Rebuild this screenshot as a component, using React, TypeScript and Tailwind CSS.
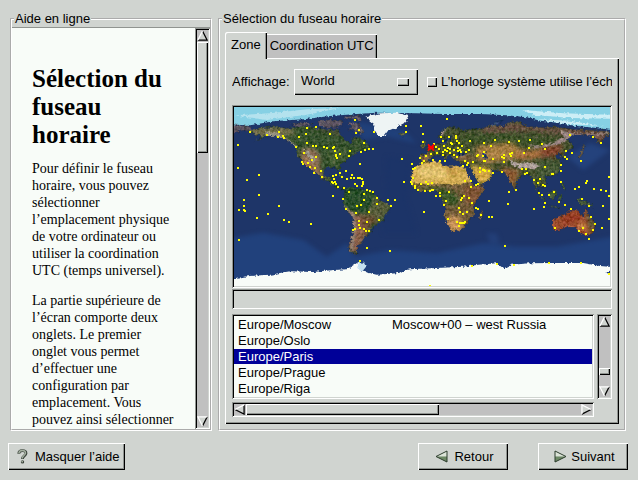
import { ReactNode } from 'react';

const raised = 'bg-[#d0d4d0] shadow-[inset_1px_1px_0_#fff,inset_-1px_-1px_0_#000,inset_-2px_-2px_0_#909490]';
const sunken = 'p-[2px] shadow-[inset_1px_1px_0_#909490,inset_-1px_-1px_0_#fff,inset_2px_2px_0_#000,inset_-2px_-2px_0_#d0d4d0]';

const zones = [
  { name: 'Europe/Moscow', note: 'Moscow+00 – west Russia' },
  { name: 'Europe/Oslo', note: '' },
  { name: 'Europe/Paris', note: '', selected: true },
  { name: 'Europe/Prague', note: '' },
  { name: 'Europe/Riga', note: '' },
];

// City markers, "x,y" in map units
const cities = `
60,96 111,105 147,96 144,111 159,108 162,114 24,135 231,84 258,81 228,102 207,111 300,102 375,60 378,99 387,91
198,141 231,129 222,159 249,138 258,138 282,141 291,144 309,144 312,141 315,153 318,165 318,168 321,174 330,162
360,153 357,168 258,171 246,180 216,186 219,192 234,189 240,201 255,204 273,213 252,219 276,231 24,204 87,225
51,240 87,285 42,300 42,318 27,330 42,330 45,333 147,318 114,342 81,354 162,360 177,366 243,372 27,420 309,288
339,297 348,327 348,213 330,219 318,225 309,228 312,237 336,231 351,237 363,234 372,234 366,225 384,234 306,246
309,249 315,246 318,252 324,261 342,264 357,276 375,252 381,258 381,318 378,339 375,387 369,390 387,363 387,375
390,483 390,192 528,78 573,78 528,96 579,102 651,57 432,96 402,129 393,156 405,150 417,147 429,147 579,126
516,177 546,192 555,204 549,207 549,234 522,246 543,246 546,252 555,258 555,264 564,270 585,273 600,272 606,270
609,270 573,252 588,246 594,252 606,249 570,174 576,189 582,183 588,168 603,162 609,180 621,159 627,147 612,132
618,141 633,111 657,111 639,123 642,138 639,156 639,165 645,150 654,144 651,153 660,147 663,129 666,132 678,108
678,114 681,123 687,129 696,138 684,144 672,150 660,159 672,165 681,171 684,153 690,150 693,156 708,156 720,123
717,150 741,168 744,165 759,168 762,183 705,183 714,189 699,198 711,195 729,186 750,216 762,210 630,183 645,183
705,243 723,243 723,261 738,255 744,252 657,276 630,279 618,288 630,288 648,303 642,315 693,300 696,294 702,288
717,294 726,309 738,324 744,327 753,345 687,324 690,336 699,342 711,336 654,357 681,366 690,369 696,369 702,369
705,366 687,378 582,336 474,300 495,300 483,318 441,294 441,312 402,282 402,300 411,270 420,273 429,276 393,315
417,336 447,360 411,366 390,384 402,387 408,393 417,393 411,444 480,453 726,498 599,558 390,234 396,237 399,246
399,252 396,258 381,258 762,129 783,138 795,120 837,126 867,123 900,120 897,144 936,132 945,147 882,159 840,162
846,159 843,168 822,165 816,171 822,174 822,186 816,216 762,156 765,183 789,177 750,204 759,210 765,213 777,213
789,219 876,207 888,207 891,219 885,222 945,201 912,240 924,249 930,237 939,255 945,258 858,270 837,276 834,312
777,303 777,351 786,351 927,279 936,285 957,285 972,276 945,309 942,321 912,327 987,306 1005,315 1023,327
1056,297 1077,318 1119,318 1083,351 1137,357 1095,372 1089,390 1116,384 1059,384 1047,393 1068,402 1077,417
975,384 993,195 993,213 993,246 966,222 969,222 1005,171 1011,177 1008,153 1026,159 1053,183 1020,105 1089,111
1113,129 1035,267 1047,261 1068,249 1071,243 1092,267 1113,270 1128,273 1138,231 1138,288 825,438 801,492
852,495 957,489 1053,489 1138,521`
  .trim()
  .split(/\s+/)
  .map((pair) => pair.split(',').map(Number));

const WorldMap = () => (
  <svg viewBox="12 21 1128 537" className="block w-full" role="img" aria-label="World">
    <defs>
      <filter id="terrain" filterUnits="userSpaceOnUse" x="0" y="10" width="1150" height="560" colorInterpolationFilters="sRGB">
        <feTurbulence type="fractalNoise" baseFrequency="0.12" numOctaves="3" seed="4" result="n" />
        <feDisplacementMap in="SourceGraphic" in2="n" scale="14" xChannelSelector="R" yChannelSelector="G" result="d" />
        <feColorMatrix in="n" type="matrix" values="1 0 0 0 0  .8 .2 0 0 0  .8 0 .2 0 0  0 0 0 0 1" result="g" />
        <feComposite in="d" in2="g" operator="arithmetic" k1="0" k2="0.94" k3="0.4" k4="-0.21" result="m" />
        <feComposite in="m" in2="d" operator="in" />
      </filter>
      <filter id="coast" filterUnits="userSpaceOnUse" x="0" y="10" width="1150" height="560" colorInterpolationFilters="sRGB">
        <feTurbulence type="fractalNoise" baseFrequency="0.1" numOctaves="2" seed="9" result="n" />
        <feDisplacementMap in="SourceGraphic" in2="n" scale="12" xChannelSelector="R" yChannelSelector="G" />
      </filter>
      <filter id="soft" filterUnits="userSpaceOnUse" x="0" y="0" width="1150" height="570" colorInterpolationFilters="sRGB">
        <feGaussianBlur stdDeviation="6" />
      </filter>
      <clipPath id="namerica">
        <path d="M55 90 90 83 130 80 175 84 215 78 260 82 300 90 325 88 333 105 350 122 362 130 370 112 388 112 410 125 420 140 412 150 388 155 372 163 358 172 345 184 331 194 330 214 322 212 316 203 300 202 284 207 280 224 290 233 304 224 308 233 302 242 316 250 328 262 345 263 340 269 320 264 296 246 274 236 258 218 238 205 222 194 208 176 199 156 196 141 176 125 160 116 132 108 108 110 70 126 98 108 66 102Z" />
      </clipPath>
      <clipPath id="samerica">
        <path d="M345 266 362 260 400 268 422 275 440 290 452 301 484 315 480 328 466 346 458 364 436 377 420 398 406 414 396 430 382 438 382 462 366 458 354 448 362 420 368 394 368 352 350 332 337 308 341 288Z" />
      </clipPath>
      <clipPath id="africa">
        <path d="M558 196 580 188 614 182 630 184 636 194 660 200 680 196 706 202 718 232 734 256 765 256 760 276 736 304 730 320 736 344 714 362 704 380 690 392 666 395 656 378 642 348 646 324 638 300 626 286 622 274 600 272 572 278 552 262 542 246 546 218Z" />
      </clipPath>
      <clipPath id="eurasia">
        <path d="M575 188 570 164 590 162 594 152 584 146 606 138 622 130 638 124 630 114 622 110 636 94 656 80 680 82 700 92 720 86 750 86 780 78 820 78 836 68 866 62 884 76 920 82 980 80 1030 88 1090 90 1140 94 1140 106 1120 112 1122 120 1104 130 1096 108 1062 104 1030 104 1010 120 1030 128 1026 146 1006 158 1008 176 994 168 984 160 976 170 992 186 992 206 982 222 962 228 944 230 950 250 938 264 922 256 922 272 934 290 922 280 912 250 908 236 892 222 876 226 862 242 854 268 842 250 832 228 820 214 794 212 780 206 790 220 776 240 748 256 738 236 722 204 714 192 690 190 672 178 658 164 650 180 636 166 612 166 602 178 588 188Z" />
      </clipPath>
      <clipPath id="australia">
        <path d="M967 360 985 350 1006 342 1020 330 1044 330 1050 344 1060 350 1066 324 1076 344 1092 362 1094 380 1086 400 1070 408 1050 398 1038 382 1010 382 990 390 970 392Z" />
      </clipPath>
    </defs>

    <rect x="0" y="0" width="1160" height="580" fill="#1e3568" />
    <g filter="url(#soft)">
      <path d="M0 415 100 398 220 420 290 470 350 430 375 470 480 450 620 460 760 430 860 440 980 440 1150 410V560H0Z" fill="#21417c" />
      <path d="M350 60 520 90 560 130 470 110 400 120Z" fill="#20407a" />
      <path d="M470 170 540 180 530 300 560 400 460 400Z" fill="#1c3468" />
      <path d="M1010 170 1080 130 1140 150 1060 210Z" fill="#24427c" />
      <path d="M770 400 800 400 810 430 780 430Z" fill="#233f78" />
    </g>

    <g filter="url(#coast)">
      <path d="M0 0H1160V92L1100 84 1040 78 980 68 930 62 890 52 830 46 750 42 640 42 560 40 440 38 380 42 300 48 220 58 130 64 60 76 0 74Z" fill="#86d0e4" />
      <path d="M12 46 120 40 230 28 330 24 230 44 110 60Z" fill="#b4e2ee" />
      <path d="M880 30 1000 40 1140 44V56L1020 54 910 44Z M920 58 1020 62 1120 78 1010 72Z" fill="#cdeef6" />
      <path d="M405 50 450 40 500 38 535 48 524 68 500 82 474 92 462 108 446 108 436 94 432 72Z" fill="#eef4f4" />
      <path d="M0 536 60 528 120 524 180 514 250 516 310 510 350 508 386 486 398 498 394 514 440 524 500 520 540 508 620 504 700 500 745 494 800 490 822 506 846 494 900 490 970 489 1060 489 1110 498 1160 502V580H0Z" fill="#f8fcf8" />
      <path d="M384 486 402 488 408 500 396 516 382 504Z" fill="#c4e0f0" />
      <path d="M1126 516 1140 512V524Z" fill="#21417c" />
    </g>

    <g filter="url(#terrain)">
      <path d="M12 74 60 78 80 96 40 92 12 98Z M180 72 230 66 250 76 200 80Z M262 62 300 58 340 64 330 82 290 86 268 76Z M340 50 390 46 396 66 370 56 344 58Z M352 66 385 68 402 90 396 106 374 92 350 88 366 80Z" fill="#635b68" />
      <path d="M770 78 800 64 822 60 794 80Z" fill="#2d4a78" />
      <path d="M568 136 578 130 574 118 584 122 590 140 576 144Z M504 100 526 98 530 106 510 108Z" fill="#6d7040" />
      <path d="M1048 178 1058 162 1066 134 1058 136 1052 160 1040 174Z M748 336 760 330 756 358 746 362Z M858 262 862 272 856 274Z" fill="#655b4c" />
      <path d="M924 276 944 298 950 312 934 296Z M956 278 976 268 980 280 970 298 958 294Z M944 312 976 318 1004 320 976 324Z M984 286 998 284 992 302 984 300Z M1038 296 1060 298 1086 314 1090 324 1068 314 1054 316Z M992 244 1002 252 1008 272 996 264Z" fill="#4c633e" />
      <path d="M308 226 336 226 352 234 334 232Z M356 236 374 236 368 242Z" fill="#4c663c" />

      <g clipPath="url(#namerica)">
        <path d="M0 50H450V300H0Z" fill="#3e5a34" />
        <g filter="url(#soft)">
          <path d="M60 80H180L200 100 160 112 60 110Z" fill="#7a7650" />
          <path d="M220 80 330 88 400 120 300 100Z" fill="#55583e" />
          <path d="M212 150 246 142 270 164 270 210 296 240 250 225 210 190Z" fill="#98785c" />
          <path d="M210 180 230 180 260 220 245 222Z" fill="#b07850" />
          <path d="M290 150 350 150 340 180 300 200Z" fill="#4b653a" />
        </g>
        <path d="M96 98 140 98 180 122 202 140 196 144 160 118 110 106Z M222 148 236 152 244 168 258 176 252 188 240 178 228 164Z" fill="#aca494" />
      </g>

      <g clipPath="url(#samerica)">
        <path d="M320 240H500V480H320Z" fill="#2f5631" />
        <g filter="url(#soft)">
          <path d="M440 280 490 310 470 350 430 380 410 340Z" fill="#606642" />
          <path d="M366 340 400 345 425 370 400 430 380 460 350 450Z" fill="#946850" />
          <path d="M400 345 440 350 410 400 396 370Z" fill="#75563a" />
        </g>
        <path d="M340 310 374 345 380 385 368 450 360 450 366 390 364 350Z" fill="#a08878" />
      </g>

      <g clipPath="url(#africa)">
        <path d="M530 170H780V410H530Z" fill="#7c6540" />
        <path d="M535 196 590 180 712 196 726 240 690 254 640 252 590 254 540 248Z" fill="#e2bb5c" />
        <g filter="url(#soft)">
          <path d="M560 200 640 205 680 215 640 236 570 234Z" fill="#f4d47c" />
          <path d="M540 262 600 262 650 266 690 290 680 320 640 310 620 276Z" fill="#44602f" />
          <path d="M700 260 760 260 740 310 710 310Z" fill="#8b5d3c" />
          <path d="M650 350 690 350 700 395 655 395Z" fill="#d8a060" />
          <path d="M650 190 690 210 670 230 650 215Z" fill="#d0a048" />
        </g>
      </g>

      <g clipPath="url(#eurasia)">
        <path d="M560 50H1160V300H560Z" fill="#4c5834" />
        <g filter="url(#soft)">
          <path d="M570 160 600 160 600 185 575 190Z M670 160 720 165 740 180 690 185Z" fill="#98704c" />
          <path d="M750 80 850 70 960 82 1140 92 1120 130 1060 110 900 92 760 96Z" fill="#7a5a4c" />
          <path d="M690 108 800 104 900 112 1000 124 960 140 840 128 700 126Z" fill="#435a2e" />
          <path d="M740 138 840 128 880 150 900 170 840 180 760 190 735 170Z" fill="#b4894a" />
          <path d="M860 160 900 150 980 140 960 160 920 176 860 180Z" fill="#b87c48" />
          <path d="M940 138 1000 134 986 168 930 172Z" fill="#8f4d34" />
          <path d="M720 196 790 206 780 250 740 250Z" fill="#e8b84e" />
          <path d="M810 200 870 210 850 270 820 220Z" fill="#9c663c" />
          <path d="M925 180 990 180 990 228 920 240Z" fill="#4d603c" />
        </g>
        <path d="M836 178 866 190 910 188 930 198 914 206 872 204 846 194Z" fill="#c0b0ac" />
        <path d="M892 134 930 138 970 128 1002 108 990 90 1020 98 1070 104 1026 110 1000 128 960 138 920 144Z M1060 102 1130 98 1140 102 1080 107Z M652 86 642 100 632 110 636 98Z" fill="#a4908c" />
      </g>
      <path d="M758 160 766 156 772 174 762 178Z M676 158 704 156 708 164 686 168Z M640 122 652 112 666 104 662 118 648 130 634 132Z" fill="#213c6c" />

      <g clipPath="url(#australia)">
        <path d="M950 310H1110V420H950Z" fill="#a85434" />
        <g filter="url(#soft)">
          <path d="M1060 320 1078 340 1100 370 1080 410 1076 370Z" fill="#5c5c38" />
          <path d="M1044 370 1064 372 1070 384 1056 390Z" fill="#f0b060" />
          <path d="M1000 350 1044 340 1050 360 1000 370Z" fill="#a03c24" />
        </g>
      </g>
    </g>

    <g fill="#ff0" shapeRendering="crispEdges">
      {cities.map(([x, y], i) => (
        <rect key={i} x={x - 3} y={y - 3} width="6" height="6" />
      ))}
    </g>
    <path d="M594 133 612 152M612 133 594 152M594 142H612" stroke="#f00" strokeWidth="5" />
  </svg>
);

type Direction = 'up' | 'down' | 'left' | 'right';

const arrows: Record<Direction, { shape: string; light: string; dark: string }> = {
  up: { shape: 'M6 1 11 11H1Z', light: 'M1 11 6 1', dark: 'M6 1 11 11H1' },
  down: { shape: 'M1 1H11L6 11Z', light: 'M6 11 1 1H11', dark: 'M11 1 6 11' },
  left: { shape: 'M1 6 11 1V11Z', light: 'M1 6 11 1', dark: 'M11 1V11L1 6' },
  right: { shape: 'M11 6 1 1V11Z', light: 'M1 11V1L11 6', dark: 'M1 11 11 6' },
};

const ArrowButton = ({ to }: { to: Direction }) => (
  <button type="button" aria-label={`Scroll ${to}`} className="shrink-0">
    <svg viewBox="0 0 12 12" className="block size-[11px]" fill="none">
      <path d={arrows[to].shape} fill="#d0d4d0" />
      <path d={arrows[to].dark} stroke="#000" strokeWidth="1.4" />
      <path d={arrows[to].light} stroke="#fff" strokeWidth="1.4" />
    </svg>
  </button>
);

const Group = ({ title, className, children }: { title: string; className: string; children: ReactNode }) => (
  <fieldset className={`flex min-h-0 min-w-0 flex-col border-2 border-white [border-style:groove] ${className}`}>
    <legend className="ml-[2px] px-px leading-4">{title}</legend>
    {children}
  </fieldset>
);

const HelpIcon = () => (
  <svg viewBox="0 0 11 15" className="h-[15px] w-[11px]" fill="none">
    <path d="M1.8 4.8C1.8 2.4 3.6 1.6 5.3 1.6S9 2.4 9 4.4 5.4 7 5.4 10" stroke="#3c443c" strokeWidth="2.8" />
    <path d="M1.8 4.4C2 2.4 3.6 1.5 5.3 1.5S8.6 2.6 8.6 4.2 5.2 7 5.2 9.6" stroke="#a4b0a0" strokeWidth="1.3" />
    <circle cx="5.5" cy="12.9" r="1.7" fill="#3c443c" />
    <circle cx="5.2" cy="12.6" r="0.9" fill="#a4b0a0" />
  </svg>
);

const NavIcon = ({ back }: { back?: boolean }) => (
  <svg viewBox="0 0 13 13" className={back ? 'size-[13px] -scale-x-100' : 'size-[13px]'}>
    <path d="M1 1 12 6.5H1Z" fill="#dce4d8" />
    <path d="M1 6.5H12L1 12Z" fill="#6c8864" />
    <path d="M1 1 12 6.5 1 12Z" fill="none" stroke="#2c3c2c" />
  </svg>
);

export default function App() {
  return (
    <div className="flex h-screen flex-col bg-[#d0d4d0] pt-[11px] pb-[10px] font-['Liberation_Sans',Arial,sans-serif] text-[13px] text-black">
      <main className="flex min-h-0 flex-1 gap-[6px] pr-3 pl-[10px]">
        <Group title="Aide en ligne" className="w-[202px] shrink-0">
          <div className="flex min-h-0 flex-1 border-t border-[#909490] bg-[#f8fcf8]">
            <article className="min-w-0 flex-1 overflow-hidden pt-[37px] pr-[18px] pl-5 font-['Liberation_Serif','Times_New_Roman',serif] text-sm leading-[17px]">
              <h1 className="mb-[11px] text-[25px] leading-7 font-bold">Sélection du fuseau horaire</h1>
              <p className="mb-[13px]">
                Pour définir le fuseau horaire, vous pouvez sélectionner l’emplacement physique de votre ordinateur ou
                utiliser la coordination UTC (temps universel).
              </p>
              <p>
                La partie supérieure de l’écran comporte deux onglets. Le premier onglet vous permet d’effectuer une
                configuration par emplacement. Vous pouvez ainsi sélectionner
              </p>
            </article>
            <div className={`flex w-[15px] flex-col items-center bg-[#c0c0c0] ${sunken}`}>
              <ArrowButton to="up" />
              <div className={`mt-px h-[111px] w-full ${raised}`} />
              <div className="flex-1" />
              <ArrowButton to="down" />
            </div>
          </div>
        </Group>

        <Group title="Sélection du fuseau horaire" className="flex-1">
          <div className="flex min-h-0 flex-1 flex-col p-[5px]">
            <div role="tablist" className="flex items-end">
              <button
                type="button"
                role="tab"
                aria-selected="true"
                className="relative z-10 -mb-px h-[27px] rounded-tl-[2px] bg-[#d0d4d0] pr-[6px] pb-[2px] pl-[6px] shadow-[inset_1px_1px_0_#fff,inset_-1px_0_0_#000,inset_-2px_0_0_#909490]"
              >
                Zone
              </button>
              <button
                type="button"
                role="tab"
                aria-selected="false"
                className="h-6 bg-[#c0c0c0] px-[3px] shadow-[inset_0_1px_0_#fff,inset_-1px_0_0_#000,inset_-2px_0_0_#909490]"
              >
                Coordination UTC
              </button>
            </div>

            <div className="flex min-h-0 flex-1 flex-col px-[7px] pt-[11px] pb-[7px] shadow-[inset_1px_1px_0_#fff,inset_-1px_-1px_0_#000,inset_-2px_-2px_0_#909490]">
              <div className="flex items-center overflow-hidden whitespace-nowrap">
                <label htmlFor="view" className="w-[62px] shrink-0">
                  Affichage:
                </label>
                <div className="relative shrink-0">
                  <select id="view" className={`h-[26px] w-[124px] appearance-none pb-[2px] pl-[7px] ${raised}`}>
                    <option>World</option>
                  </select>
                  <span className={`pointer-events-none absolute top-[9px] right-[9px] h-2 w-3 ${raised}`} />
                </div>
                <label className="ml-[9px] flex items-center gap-1">
                  <input type="checkbox" className={`size-[10px] shrink-0 appearance-none ${raised}`} />
                  L’horloge système utilise l’échelle
                </label>
              </div>

              <div className={`mt-[10px] shrink-0 bg-[#d0d4d0] ${sunken}`}>
                <WorldMap />
              </div>
              <div className={`mt-px h-5 shrink-0 ${sunken}`} />

              <div className="mt-[5px] grid min-h-0 flex-1 grid-cols-[1fr_15px] grid-rows-[1fr_15px] gap-[3px]">
                <div className={`min-h-0 overflow-hidden bg-[#f8fcf8] pt-[3px] ${sunken}`}>
                  <table className="w-full border-separate border-spacing-0 leading-[15px]">
                    <tbody>
                      {zones.map((zone) => (
                        <tr key={zone.name} className={zone.selected ? 'bg-[#000098] text-white' : ''}>
                          <td className="w-[154px] border-b border-[#f8fcf8] p-0 pl-1">{zone.name}</td>
                          <td className="border-b border-[#f8fcf8] p-0 pl-1">{zone.note}</td>
                        </tr>
                      ))}
                    </tbody>
                  </table>
                </div>
                <div className={`flex flex-col items-center bg-[#c0c0c0] ${sunken}`}>
                  <ArrowButton to="up" />
                  <div className="flex-1" />
                  <div className={`mb-[11px] h-[7px] w-full ${raised}`} />
                  <ArrowButton to="down" />
                </div>
                <div className={`flex items-center bg-[#c0c0c0] ${sunken}`}>
                  <ArrowButton to="left" />
                  <div className={`ml-px h-full w-[54%] ${raised}`} />
                  <div className="flex-1" />
                  <ArrowButton to="right" />
                </div>
              </div>
            </div>
          </div>
        </Group>
      </main>

      <footer className="mt-3 flex gap-[30px] pr-[10px] pl-2">
        <button type="button" className={`mr-auto flex h-[27px] w-[117px] items-center gap-[7px] pl-[9px] ${raised}`}>
          <HelpIcon />
          Masquer l’aide
        </button>
        <button type="button" className={`flex h-[27px] w-[90px] items-center justify-center gap-[6px] pl-[3px] ${raised}`}>
          <NavIcon back />
          Retour
        </button>
        <button type="button" className={`flex h-[27px] w-[90px] items-center justify-center gap-1 pl-[3px] ${raised}`}>
          <NavIcon />
          Suivant
        </button>
      </footer>
    </div>
  );
}
